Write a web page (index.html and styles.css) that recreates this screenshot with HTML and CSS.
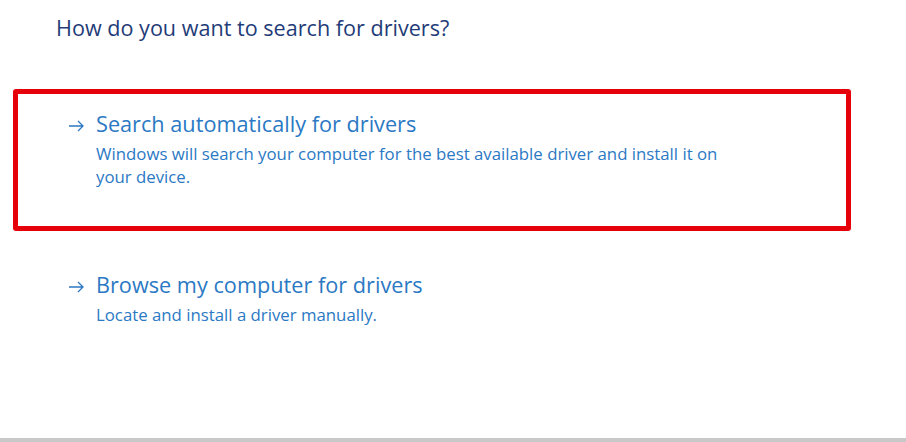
FILE: index.html
```html
<!DOCTYPE html>
<html lang="en">
<head>
    <meta charset="UTF-8">
    <meta name="viewport" content="width=device-width, initial-scale=1.0">
    <title>Update Drivers</title>
    <link rel="stylesheet" href="styles.css">
</head>
<body>
    <div class="page">
        <h1 class="title">How do you want to search for drivers?</h1>

        <div class="option option-selected">
            <svg class="arrow" width="16" height="12" viewBox="0 0 16 12">
                <path d="M1 6 H15 M10 1 L15 6 L10 11" fill="none" stroke="#2c78c4" stroke-width="1.3"/>
            </svg>
            <div class="option-text">
                <div class="option-title">Search automatically for drivers</div>
                <div class="option-desc">Windows will search your computer for the best available driver and install it on your device.</div>
            </div>
        </div>

        <div class="option">
            <svg class="arrow" width="16" height="12" viewBox="0 0 16 12">
                <path d="M1 6 H15 M10 1 L15 6 L10 11" fill="none" stroke="#2c78c4" stroke-width="1.3"/>
            </svg>
            <div class="option-text">
                <div class="option-title">Browse my computer for drivers</div>
                <div class="option-desc">Locate and install a driver manually.</div>
            </div>
        </div>
    </div>
    <div class="footer-bar"></div>
</body>
</html>
```

FILE: styles.css
```css
html, body {
    height: 100%;
}
body {
    margin: 0;
    background-color: #fff;
    font-family: "Open Sans", "Noto Sans", sans-serif;
    display: flex;
    flex-direction: column;
}
.page {
    flex: 1;
    padding: 13px 0 0 13px;
}
.title {
    margin: 0 0 46px 43px;
    font-size: 21.6px;
    font-weight: normal;
    color: #1f3c78;
    line-height: 30px;
}
.option {
    display: flex;
    align-items: flex-start;
    width: 828px;
    height: 132px;
    border: 5px solid transparent;
    border-radius: 3px;
    margin-bottom: 19px;
}
.option-selected {
    border-color: #e5000a;
}
.arrow {
    flex: none;
    margin: 26px 12px 0 50px;
}
.option-text {
    padding-top: 15px;
    width: 650px;
}
.option-title {
    font-size: 21.7px;
    line-height: 30px;
    color: #2b79c4;
}
.option-desc {
    margin-top: 3px;
    font-size: 16.8px;
    line-height: 23px;
    color: #2b79c4;
}
.footer-bar {
    height: 4px;
    background-color: #c8c8c8;
}
```
